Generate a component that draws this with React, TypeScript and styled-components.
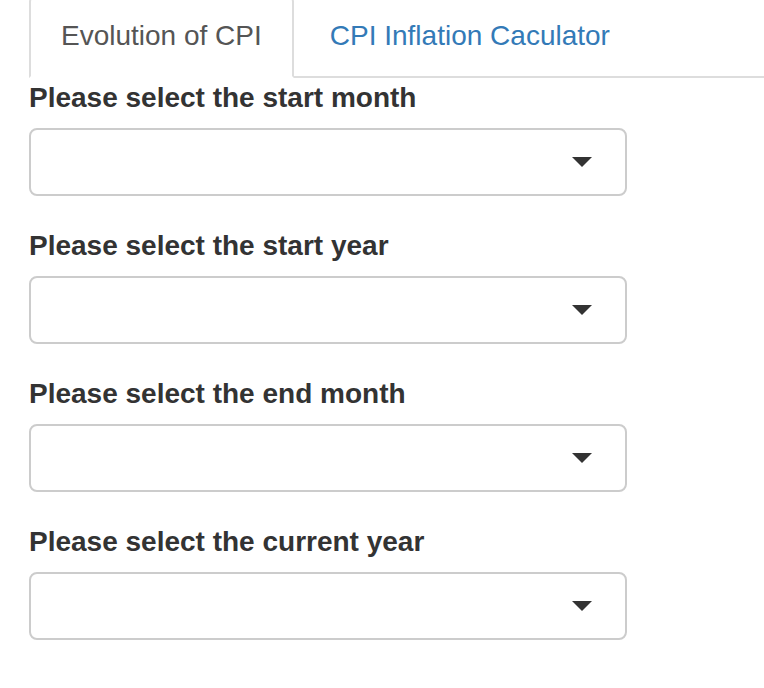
import styled, { createGlobalStyle } from "styled-components";

const GlobalStyle = createGlobalStyle`
  html, body {
    margin: 0;
    padding: 0;
    background: #fff;
  }
  body {
    font-family: "Liberation Sans", Arial, sans-serif;
    font-size: 28px;
    line-height: 1.42857;
    color: #333;
  }
`;

const fields = [
  "Please select the start month",
  "Please select the start year",
  "Please select the end month",
  "Please select the current year",
];

export default function App() {
  return (
    <>
      <GlobalStyle />
      <Page>
        <TabBar>
          <Tab $active>
            <TabLink $active>Evolution of CPI</TabLink>
          </Tab>
          <Tab>
            <TabLink>CPI Inflation Caculator</TabLink>
          </Tab>
        </TabBar>
        <Form>
          {fields.map((label) => (
            <FormGroup key={label}>
              <Label>{label}</Label>
              <SelectBox>
                <Caret />
              </SelectBox>
            </FormGroup>
          ))}
        </Form>
      </Page>
    </>
  );
}

const Page = styled.div`
  padding-left: 29px;
  overflow: hidden;
`;

const TabBar = styled.ul`
  display: flex;
  list-style: none;
  margin: -6px 0 0;
  padding: 0;
  border-bottom: 2px solid #ddd;
`;

const Tab = styled.li<{ $active?: boolean }>`
  margin-right: 4px;
  margin-bottom: -2px;
  border: 2px solid ${(p) => (p.$active ? "#ddd" : "transparent")};
  border-bottom-color: ${(p) => (p.$active ? "#fff" : "transparent")};
  border-radius: 8px 8px 0 0;
  background: ${(p) => (p.$active ? "#fff" : "transparent")};
`;

const TabLink = styled.a<{ $active?: boolean }>`
  display: block;
  padding: 20px 30px;
  line-height: 40px;
  color: ${(p) => (p.$active ? "#555" : "#337ab7")};
  text-decoration: none;
  cursor: pointer;
`;

const Form = styled.div`
  display: flex;
  flex-direction: column;
`;

const FormGroup = styled.div`
  display: flex;
  flex-direction: column;
  margin-bottom: 30px;
`;

const Label = styled.label`
  font-weight: bold;
  line-height: 40px;
  margin-bottom: 10px;
  color: #333;
`;

const SelectBox = styled.div`
  box-sizing: border-box;
  width: 598px;
  height: 68px;
  border: 2px solid #ccc;
  border-radius: 8px;
  background: #fff;
  display: flex;
  align-items: center;
  justify-content: flex-end;
  padding-right: 33px;
`;

const Caret = styled.span`
  width: 0;
  height: 0;
  border-style: solid;
  border-width: 10px 10px 0 10px;
  border-color: #333 transparent transparent transparent;
`;
